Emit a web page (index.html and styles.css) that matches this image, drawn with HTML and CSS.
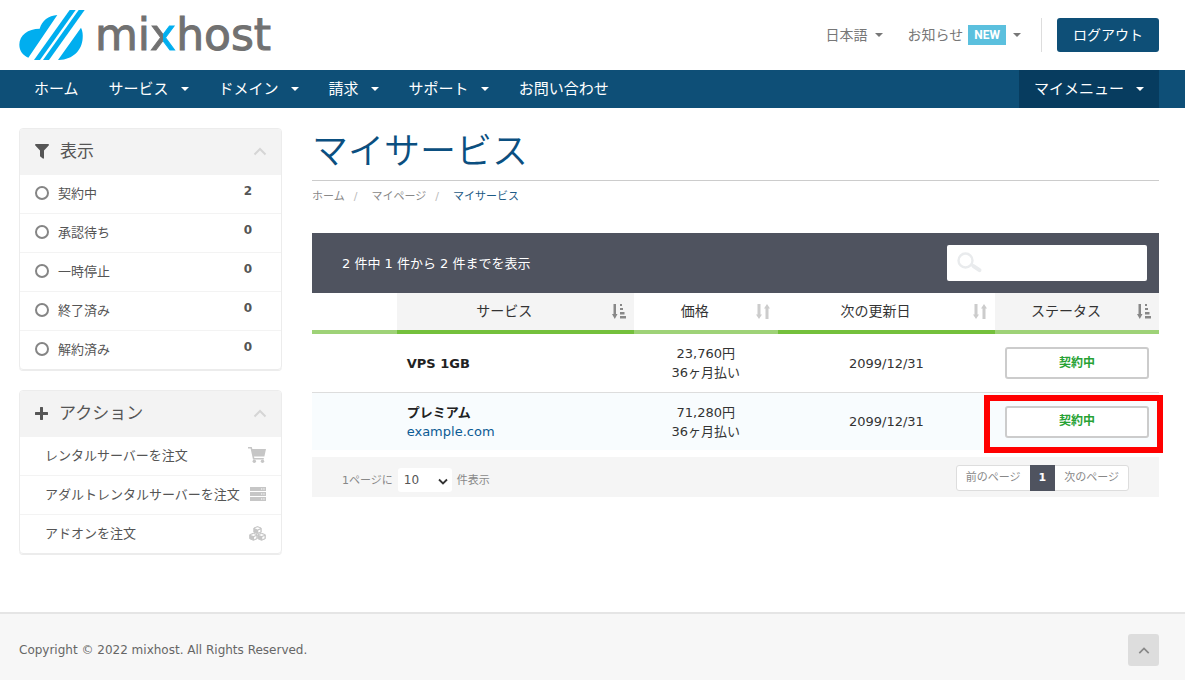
FILE: index.html
```html
<!DOCTYPE html>
<html lang="ja">
<head>
<meta charset="utf-8">
<meta name="viewport" content="width=device-width, initial-scale=1">
<title>マイサービス - mixhost</title>
<link rel="stylesheet" href="styles.css">
</head>
<body>
<svg class="sprite" aria-hidden="true">
  <symbol id="chevron-up" viewBox="0 0 14 9"><path d="M1.5 7.5 7 2l5.500 5.500" fill="none" stroke="currentColor" stroke-width="2"/></symbol>
  <symbol id="sort-active" viewBox="0 0 14 15"><path d="M1.500 0h2.500v10h1.500l-2.700 5L0 10h1.500zM8 0h2v2H8zM8 4h3v2H8zM8 8h4.500v2.500H8zM8 12h6v2.500H8z" fill="currentColor"/></symbol>
  <symbol id="sort" viewBox="0 0 14 15"><path d="M1.500 0h3v10.500h1.500l-3 4.500-3-4.500h1.500zM9.500 15h3V4.500H14L11 0 8 4.500h1.500z" fill="currentColor"/></symbol>
</svg>

<header class="header">
  <a class="logo" href="#" aria-label="mixhost">
    <svg class="logo-mark" viewBox="0 0 198 150" aria-hidden="true">
      <g fill="#00aeef">
        <path d="M115 15C88 17 69 32 62 56 27 56 1 76 1 104c0 18 11 32 27 39z"/>
        <path d="M152 0h18L63 150H45z"/>
        <path d="M179 0h18L90 150H72z"/>
        <path d="M186 53c5 10 6 21 5 32-2 36-29 64-71 65h-3z"/>
      </g>
    </svg>
    <span class="logo-text">mi<span class="logo-x">x</span>host</span>
  </a>
  <div class="top-links">
    <a class="top-link" href="#">日本語<span class="caret"></span></a>
    <a class="top-link news" href="#">お知らせ<span class="badge">NEW</span><span class="caret"></span></a>
    <span class="divider"></span>
    <button class="logout" type="button">ログアウト</button>
  </div>
</header>

<nav class="nav">
  <a href="#">ホーム</a>
  <a href="#">サービス<span class="caret"></span></a>
  <a href="#">ドメイン<span class="caret"></span></a>
  <a href="#">請求<span class="caret"></span></a>
  <a href="#">サポート<span class="caret"></span></a>
  <a href="#">お問い合わせ</a>
  <a class="my-menu" href="#">マイメニュー<span class="caret"></span></a>
</nav>

<div class="page">
  <aside class="sidebar">
    <section class="panel">
      <h2 class="panel-head">
        <svg width="14" height="15" viewBox="0 0 14 15" aria-hidden="true"><path d="M.6 0h12.800q1 .6.300 1.500L9 6.500V14q-.3 1-1.200.5L5 12.300V6.500L.3 1.500Q-.3.6.600 0z" fill="#555"/></svg>
        <span>表示</span>
        <svg class="chevron"><use href="#chevron-up"/></svg>
      </h2>
      <a class="filter" href="#"><i class="ring"></i>契約中<b>2</b></a>
      <a class="filter" href="#"><i class="ring"></i>承認待ち<b>0</b></a>
      <a class="filter" href="#"><i class="ring"></i>一時停止<b>0</b></a>
      <a class="filter" href="#"><i class="ring"></i>終了済み<b>0</b></a>
      <a class="filter" href="#"><i class="ring"></i>解約済み<b>0</b></a>
    </section>
    <section class="panel">
      <h2 class="panel-head">
        <svg width="13" height="13" viewBox="0 0 13 13" aria-hidden="true"><path d="M6.500 1v11M1 6.500h11" stroke="#555" stroke-width="3" stroke-linecap="round"/></svg>
        <span>アクション</span>
        <svg class="chevron"><use href="#chevron-up"/></svg>
      </h2>
      <a class="action" href="#"><span>レンタルサーバーを注文</span>
        <svg width="18" height="16" viewBox="0 0 18 16" aria-hidden="true"><path d="M0 0h3.800l.5 2H18l-1.600 7.500H6l.3 1.600h9.500v1.400H5L2.600 1.500H0z" fill="#c6c6c6"/><circle cx="6.300" cy="14.200" r="1.700" fill="#c6c6c6"/><circle cx="14.500" cy="14.200" r="1.700" fill="#c6c6c6"/></svg></a>
      <a class="action" href="#"><span>アダルトレンタルサーバーを注文</span>
        <svg width="16" height="14" viewBox="0 0 16 14" aria-hidden="true"><path d="M0 0h16v4H0zM0 5h16v4H0zM0 10h16v4H0z" fill="#c6c6c6"/><path d="M11 2h1.300m1 0h1.300M11 7h1.300m1 0h1.300M11 12h1.300m1 0h1.300" stroke="#fff" stroke-width="1.200"/></svg></a>
      <a class="action" href="#"><span>アドオンを注文</span>
        <svg width="17" height="15" viewBox="0 0 17 15" aria-hidden="true"><g fill="#c6c6c6" stroke="#c6c6c6" stroke-linejoin="round"><path d="m8.500.6 3.700 1.500v4L8.500 7.700 4.800 6.100v-4z"/><path d="m4.400 7.200 3.700 1.500v4l-3.700 1.600-3.700-1.600v-4z"/><path d="m12.600 7.200 3.700 1.500v4l-3.700 1.600-3.700-1.600v-4z"/></g><path d="m5.800 2.300 2.700-1 2.700 1-2.700 1.100zM1.700 8.900l2.700-1 2.700 1L4.400 10zM9.900 8.900l2.700-1 2.700 1-2.700 1.100zM9.200 6.600V4.400l2.200-.9v2.200zM5.100 13.200V11l2.200-.9v2.200zM13.300 13.200V11l2.200-.9v2.200z" fill="#fff"/></svg></a>
    </section>
  </aside>

  <main class="main">
    <h1>マイサービス</h1>
    <div class="crumbs">
      <a href="#">ホーム</a><span class="slash">/</span><a href="#">マイページ</a><span class="slash">/</span><span class="current">マイサービス</span>
    </div>

    <div class="table-top">
      <span>2 件中 1 件から 2 件までを表示</span>
      <label class="search">
        <svg width="26" height="21" viewBox="0 0 26 21" aria-hidden="true"><circle cx="8.500" cy="8.500" r="7" fill="none" stroke="#e9ebed" stroke-width="2.400"/><path d="m14 12.500 2 1.500" stroke="#e9ebed" stroke-width="2"/><path d="m16.500 14.200 6 4" stroke="#e9ebed" stroke-width="4" stroke-linecap="round"/></svg>
        <input type="search" aria-label="検索">
      </label>
    </div>

    <table class="services">
      <colgroup><col class="c-icon"><col class="c-service"><col class="c-price"><col class="c-date"><col class="c-status"></colgroup>
      <thead>
        <tr>
          <th></th>
          <th class="sorted">サービス<svg class="sort"><use href="#sort-active"/></svg></th>
          <th>価格<svg class="sort"><use href="#sort"/></svg></th>
          <th>次の更新日<svg class="sort"><use href="#sort"/></svg></th>
          <th class="sorted">ステータス<svg class="sort"><use href="#sort-active"/></svg></th>
        </tr>
      </thead>
      <tbody>
        <tr>
          <td></td>
          <td class="name"><strong>VPS 1GB</strong></td>
          <td>23,760円<br>36ヶ月払い</td>
          <td>2099/12/31</td>
          <td class="status-cell"><button class="status" type="button">契約中</button></td>
        </tr>
        <tr>
          <td></td>
          <td class="name"><strong>プレミアム</strong><br><a href="#">example.com</a></td>
          <td>71,280円<br>36ヶ月払い</td>
          <td>2099/12/31</td>
          <td class="status-cell marked"><button class="status" type="button">契約中</button></td>
        </tr>
      </tbody>
    </table>

    <div class="table-bottom">
      <label class="per-page">1ページに
        <span class="select"><select><option>10</option><option>25</option><option>50</option></select><svg width="10" height="7" viewBox="0 0 10 7" aria-hidden="true"><path d="m1 1.500 4 4 4-4" fill="none" stroke="#333" stroke-width="1.800"/></svg></span>
        件表示</label>
      <div class="pager"><a href="#">前のページ</a><a class="on" href="#">1</a><a href="#">次のページ</a></div>
    </div>
  </main>
</div>

<footer class="footer">
  <span>Copyright © 2022 mixhost. All Rights Reserved.</span>
  <a class="to-top" href="#" aria-label="ページの先頭へ"><svg class="chevron"><use href="#chevron-up"/></svg></a>
</footer>
</body>
</html>
```
FILE: styles.css
```css
* { box-sizing: border-box; }

body {
  margin: 0;
  min-height: 100vh;
  display: flex;
  flex-direction: column;
  background: #fff;
  color: #333;
  font: 13px/19px "DejaVu Sans", "Noto Sans CJK JP", sans-serif;
}

a { color: inherit; text-decoration: none; }
button, input, select { font: inherit; }
.sprite { position: absolute; width: 0; height: 0; }

.caret {
  display: inline-block;
  border: 4px solid transparent;
  border-top-color: currentColor;
  border-bottom: 0;
}

/* Header */
.header {
  display: flex;
  justify-content: space-between;
  align-items: center;
  height: 70px;
  padding: 0 26px 0 19px;
}
.logo { display: flex; align-items: center; gap: 10px; }
.logo-mark { width: 66px; height: 50px; }
.logo-text { color: #717171; font-size: 44px; line-height: 50px; -webkit-text-stroke: 1px #717171; }
.logo-x {
  background: linear-gradient(90deg, #717171 50%, #00aeef 50%);
  -webkit-background-clip: text;
  background-clip: text;
  color: transparent;
  -webkit-text-stroke: 1px transparent;
}
.top-links { display: flex; align-items: center; color: #777; font-size: 14px; }
.top-link { display: flex; align-items: center; gap: 7px; margin-right: 25px; }
.news { gap: 5px; margin-right: 20px; }
.news .caret { margin-left: 2px; }
.badge {
  padding: 0 6px;
  background: #5bc0de;
  color: #fff;
  font: bold 12px/20px Roboto, sans-serif;
}
.divider { width: 1px; height: 34px; margin-right: 15px; background: #ddd; }
.logout {
  height: 34px;
  padding: 0 16px;
  border: 0;
  border-radius: 3px;
  background: #0e4f77;
  color: #fff;
}

/* Navigation */
.nav {
  display: flex;
  height: 38px;
  padding: 0 26px 0 19px;
  background: #0e4f77;
  color: #fff;
  font-size: 15px;
}
.nav a { display: flex; align-items: center; gap: 12px; padding: 0 15px; }
.nav .my-menu { margin-left: auto; background: #073c5f; }

/* Page */
.page {
  display: grid;
  grid-template-columns: 263px minmax(0, 1fr);
  gap: 30px;
  padding: 20px 26px 58px 19px;
}
.sidebar { display: flex; flex-direction: column; gap: 20px; color: #555; }
.panel {
  border: 1px solid #ececec;
  border-radius: 4px;
  box-shadow: 0 1px 0 #ececec;
  overflow: hidden;
}
.panel-head {
  display: flex;
  align-items: center;
  gap: 11px;
  height: 45px;
  margin: 0;
  padding: 0 14px 0 15px;
  background: #f3f3f3;
  font-size: 17px;
  font-weight: 400;
}
.chevron { width: 14px; height: 9px; color: #d5d5d5; }
.panel-head .chevron { margin-left: auto; }
.filter, .action {
  display: flex;
  align-items: center;
  height: 39px;
  border-top: 1px solid #f3f3f3;
}
.filter { padding: 0 29px 2px 15px; }
.filter b { margin: 0 0 3px auto; font-size: 12px; }
.ring { width: 14px; height: 14px; margin-right: 9px; border: 2px solid #858585; border-radius: 50%; }
.action { justify-content: space-between; padding: 0 15px 2px 25px; white-space: nowrap; }
.action svg { flex: none; }

h1 {
  margin: 0;
  padding-bottom: 4px;
  border-bottom: 1px solid #ccc;
  color: #0b4f80;
  font-size: 36px;
  font-weight: 350;
  line-height: 48px;
}
.crumbs { margin: 6px 0 27px; color: #888; font-size: 11px; line-height: 19px; }
.slash { padding: 0 14px 0 9px; color: #bbb; }
.current { color: #1c5a85; }

/* Services table */
.table-top {
  display: flex;
  justify-content: space-between;
  align-items: center;
  height: 60px;
  padding: 0 12px 0 30px;
  background: #4f535f;
  color: #fff;
}
.search { position: relative; display: block; }
.search svg { position: absolute; left: 10px; top: 7px; }
.search input {
  display: block;
  width: 200px;
  height: 36px;
  padding: 0 10px 0 40px;
  border: 0;
  border-radius: 2px;
  background: #fff;
}
.services { width: 100%; table-layout: fixed; border-collapse: separate; border-spacing: 0; text-align: center; }
.c-icon { width: 10%; }
.c-service { width: 28%; }
.c-price { width: 17%; }
.c-status { width: 164px; }
th {
  position: relative;
  height: 41px;
  padding: 0 32px 0 10px;
  border-bottom: 4px solid #9ed277;
  font-size: 14px;
  font-weight: 400;
}
th:nth-child(even) { border-bottom-color: #74c03c; }
.sort { position: absolute; right: 8px; top: 11px; width: 14px; height: 15px; color: #ccc; }
.sorted { background: #f4f4f4; }
.sorted .sort { color: #888; }
td { height: 58px; padding: 0 10px; }
tr + tr td { border-top: 1px solid #ddd; background: #f8fcfe; }
.name { text-align: left; }
.name strong { color: #222; font-size: 13px; }
.name a { color: #0b5b94; }
.status-cell { position: relative; }
.status {
  display: block;
  width: 100%;
  height: 32px;
  padding: 0;
  border: 2px solid #ccc;
  border-radius: 3px;
  background: #fff;
  color: #27a234;
  font-size: 12px;
  font-weight: 700;
}
.marked::after {
  content: "";
  position: absolute;
  inset: 2px -4px -3px -11px;
  border: 6px solid #f00;
  pointer-events: none;
}

.table-bottom {
  display: flex;
  justify-content: space-between;
  align-items: center;
  height: 40px;
  margin-top: 7px;
  padding: 2px 30px 0;
  background: #f5f5f5;
  color: #888;
  font-size: 11px;
}
.per-page { display: flex; align-items: center; gap: 5px; padding-top: 4px; }
.select { position: relative; }
.select svg { position: absolute; right: 4px; top: 10px; pointer-events: none; }
.select select {
  display: block;
  appearance: none;
  width: 54px;
  height: 24px;
  padding: 0 6px;
  border: 0;
  border-radius: 3px;
  background: #fff;
  color: #555;
  font-size: 12px;
}
.pager {
  display: flex;
  border: 1px solid #ddd;
  border-radius: 3px;
  background: #fff;
  line-height: 24px;
}
.pager a { padding: 0 9px; }
.pager .on { margin: -1px 0; padding: 1px 9px; background: #4f535f; color: #fff; font-weight: 700; }

/* Footer */
.footer {
  display: flex;
  flex: 1;
  justify-content: space-between;
  align-items: center;
  padding: 6px 26px 0 19px;
  border-top: 2px solid #e5e5e5;
  background: #f7f7f7;
  color: #666;
  font-size: 12px;
}
.to-top {
  display: grid;
  place-items: center;
  width: 31px;
  height: 32px;
  border-radius: 3px;
  background: #ddd;
}
.to-top .chevron { width: 12px; color: #888; }
```
